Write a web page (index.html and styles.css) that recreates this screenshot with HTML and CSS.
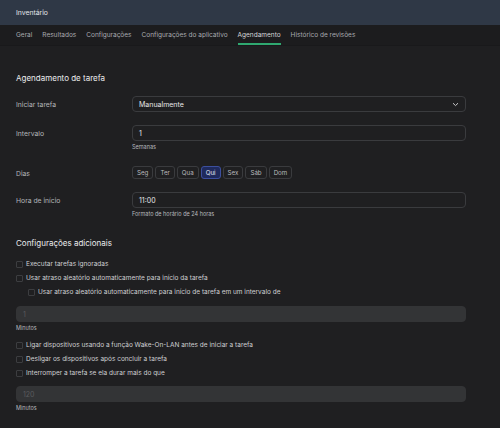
FILE: index.html
```html
<!DOCTYPE html>
<html lang="pt">

<head>
    <meta charset="UTF-8">
    <title>Inventário</title>
    <link rel="stylesheet" href="styles.css">
</head>

<body>
    <div class="app-header">Inventário</div>
    <nav class="tabs">
        <span class="tab">Geral</span>
        <span class="tab">Resultados</span>
        <span class="tab">Configurações</span>
        <span class="tab">Configurações do aplicativo</span>
        <span class="tab active">Agendamento</span>
        <span class="tab">Histórico de revisões</span>
    </nav>

    <div class="content">
        <h2 class="section-title">Agendamento de tarefa</h2>

        <div class="form-row">
            <label class="form-label">Iniciar tarefa</label>
            <div class="form-field">
                <div class="select">
                    <span>Manualmente</span>
                    <svg width="7" height="5" viewBox="0 0 7 5"><path d="M1 1.2 L3.5 3.6 L6 1.2" fill="none" stroke="#c9c9cc" stroke-width="1"/></svg>
                </div>
            </div>
        </div>

        <div class="form-row">
            <label class="form-label">Intervalo</label>
            <div class="form-field">
                <div class="input">1</div>
                <div class="hint">Semanas</div>
            </div>
        </div>

        <div class="form-row days-row">
            <label class="form-label">Dias</label>
            <div class="form-field days">
                <span class="day">Seg</span>
                <span class="day">Ter</span>
                <span class="day">Qua</span>
                <span class="day selected">Qui</span>
                <span class="day">Sex</span>
                <span class="day">Sáb</span>
                <span class="day">Dom</span>
            </div>
        </div>

        <div class="form-row">
            <label class="form-label">Hora de início</label>
            <div class="form-field">
                <div class="input">11:00</div>
                <div class="hint">Formato de horário de 24 horas</div>
            </div>
        </div>

        <h2 class="section-title extra">Configurações adicionais</h2>

        <div class="check"><span class="box"></span>Executar tarefas ignoradas</div>
        <div class="check"><span class="box"></span>Usar atraso aleatório automaticamente para início da tarefa</div>
        <div class="check nested"><span class="box"></span>Usar atraso aleatório automaticamente para início de tarefa em um intervalo de</div>
        <div class="input disabled">1</div>
        <div class="hint">Minutos</div>

        <div class="check first"><span class="box"></span>Ligar dispositivos usando a função Wake-On-LAN antes de iniciar a tarefa</div>
        <div class="check"><span class="box"></span>Desligar os dispositivos após concluir a tarefa</div>
        <div class="check last"><span class="box"></span>Interromper a tarefa se ela durar mais do que</div>
        <div class="input disabled">120</div>
        <div class="hint">Minutos</div>
    </div>
</body>

</html>
```

FILE: styles.css
```css
body {
    margin: 0;
    background-color: #1f1f21;
    font-family: Inter, "Noto Sans", sans-serif;
    color: #d8d8da;
    font-size: 7px;
}

.app-header {
    height: 25px;
    background-color: #2f3846;
    color: #e4e6ea;
    padding-left: 16px;
    display: flex;
    align-items: center;
    font-size: 6.8px;
}

.tabs {
    height: 20px;
    background-color: #1c1c1e;
    border-bottom: 1px solid #19191b;
    display: flex;
    padding-left: 16px;
    gap: 10px;
}

.tab {
    display: flex;
    align-items: center;
    color: #a9abb0;
    font-size: 6.5px;
    border-bottom: 2px solid transparent;
    padding-top: 2px;
}

.tab.active {
    color: #d6d8db;
    border-bottom-color: #2fa870;
}

.content {
    padding: 0 34px 0 16px;
}

.section-title {
    font-size: 8px;
    font-weight: 400;
    color: #ececee;
    margin: 27px 0 13px;
}

.section-title.extra {
    margin: 21px 0 9px;
}

.form-row {
    display: flex;
    align-items: flex-start;
    margin-bottom: 13px;
}

.form-label {
    width: 116px;
    flex-shrink: 0;
    color: #b4b6ba;
    font-size: 6.8px;
    padding-top: 4px;
}

.form-field {
    flex: 1;
}

.select,
.input {
    height: 16px;
    box-sizing: border-box;
    border: 1px solid #3a3b3e;
    border-radius: 4px;
    display: flex;
    align-items: center;
    justify-content: space-between;
    padding: 0 6px 0 6px;
    color: #e6e6e8;
    font-size: 7px;
}

.hint {
    font-size: 5.5px;
    color: #b8babe;
    margin-top: 3px;
}

.days-row {
    margin-top: 16px;
    margin-bottom: 13px;
}

.days-row .form-label {
    padding-top: 3px;
}

.days {
    display: flex;
    gap: 2px;
}

.day {
    height: 13px;
    box-sizing: border-box;
    padding: 0 4px;
    border: 1px solid #3a3b3e;
    border-radius: 3px;
    display: flex;
    align-items: center;
    color: #b8babe;
    font-size: 6.2px;
}

.day.selected {
    background-color: #1f2a5c;
    border-color: #3c4f9e;
    color: #e0e4f4;
}

.check {
    display: flex;
    align-items: center;
    color: #cfd0d3;
    font-size: 6.5px;
    height: 14px;
}

.check.nested {
    padding-left: 12px;
    margin-bottom: 7px;
}

.check.first {
    margin-top: 7px;
}

.check.last {
    margin-bottom: 6px;
}

.box {
    width: 5px;
    height: 5px;
    border: 1px solid #3c3d40;
    border-radius: 1px;
    margin-right: 3px;
}

.input.disabled {
    background-color: #333436;
    border-color: #333436;
    color: #5a5b5e;
    justify-content: flex-start;
}
```
